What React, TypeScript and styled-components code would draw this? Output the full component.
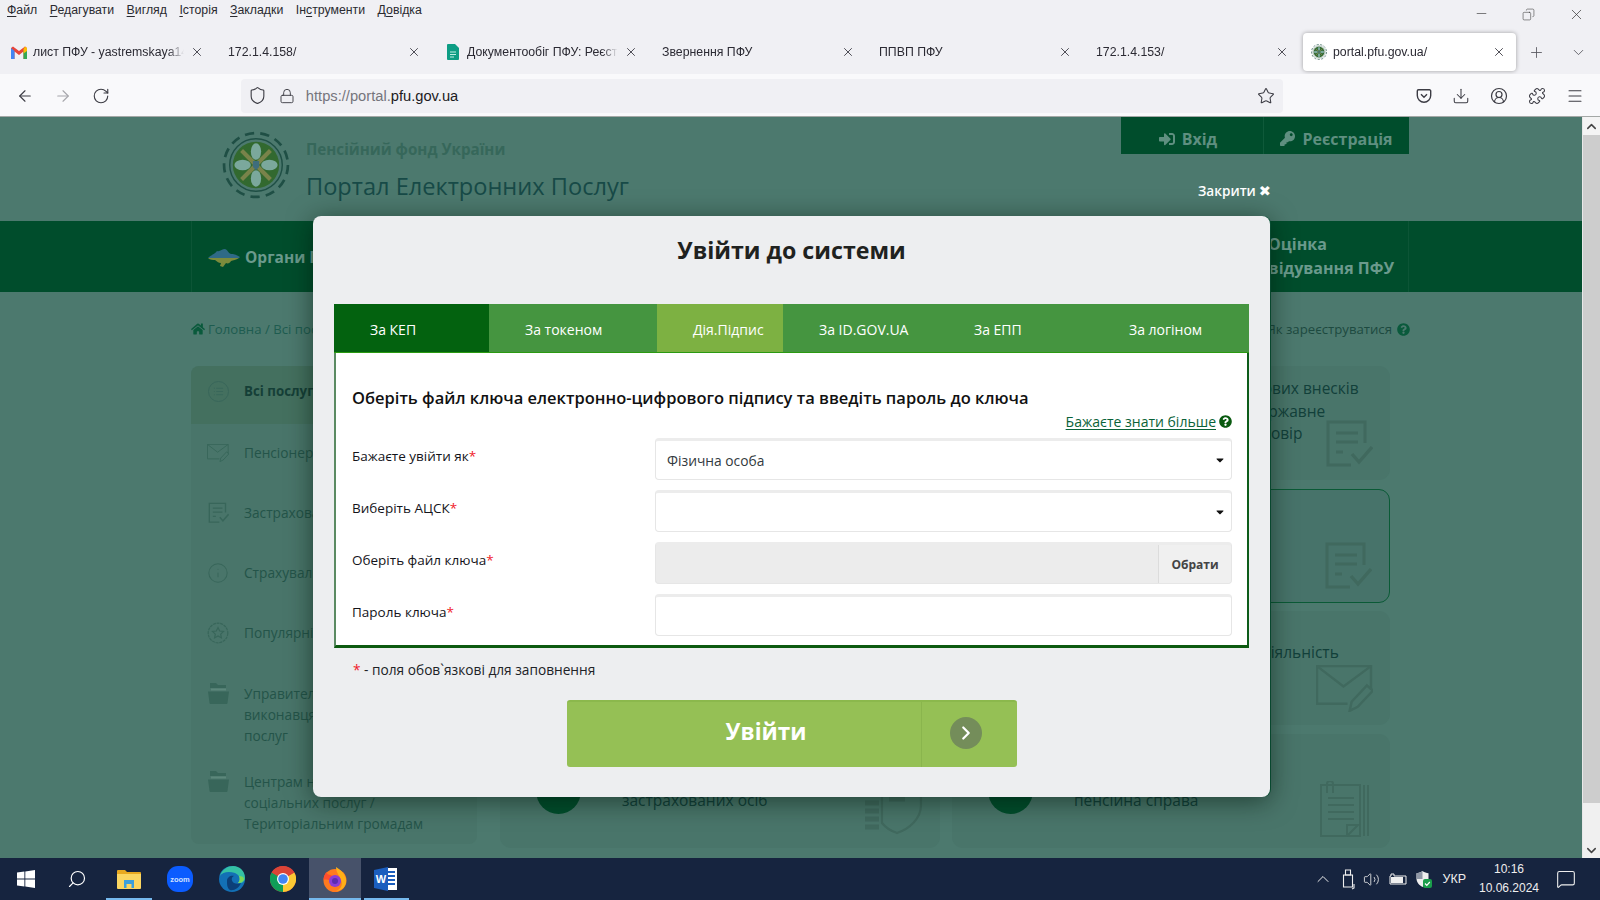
import React from "react";
import styled, { createGlobalStyle } from "styled-components";
import { ArrowLeft, ArrowRight, RotateCw, Shield, Lock, Star, Download, CircleUserRound, Puzzle, Menu, Minus, X, Plus, ChevronDown, Copy, ChevronUp, ChevronRight, List, Info, Volume2, MessageSquare, Search } from "lucide-react";
import { FaSignInAlt, FaKey, FaHome, FaQuestionCircle, FaCaretDown } from "react-icons/fa";

const Global = createGlobalStyle`
  html, body { margin: 0; padding: 0; width: 1600px; height: 900px; overflow: hidden; }
  * { box-sizing: border-box; }
  body { font-family: "Open Sans", "Noto Sans", sans-serif; }
`;

const Screen = styled.div`
  width: 1600px; height: 900px; display: flex; flex-direction: column; background: #f0f0f4;
`;
const UiFont = `"Liberation Sans", "Noto Sans", sans-serif`;

/* browser chrome */
const MenuBar = styled.div`
  height: 32px; display: flex; padding: 0 15px 0 7px; font-family: ${UiFont}; font-size: 12.3px; color: #2a2a30; position: relative;
`;
const MenuItem = styled.span`
  margin-right: 12.5px; line-height: 20px; white-space: nowrap;
  u { text-underline-offset: 2px; }
`;
const WinControls = styled.div`
  margin-left: auto; display: flex; align-items: flex-start; gap: 33px; padding-top: 6px; color: #333;
`;
const TabStrip = styled.div`
  height: 42px; display: flex; align-items: flex-start; padding: 1px 0 0 1px; gap: 4px;
`;
const Tab = styled.div<{ $active?: boolean }>`
  width: 213px; height: 38px; display: flex; align-items: center; padding: 0 10px 0 ${(p) => (p.$active ? 8 : 10)}px; gap: 6px;
  font-family: ${UiFont}; font-size: 12.3px; color: #2b2a33; border-radius: 4px; white-space: nowrap;
  background: ${(p) => (p.$active ? "#fff" : "transparent")};
  box-shadow: ${(p) => (p.$active ? "0 0 4px rgba(0,0,0,.35)" : "none")};
`;
const TabTitle = styled.span`
  flex: 1; overflow: hidden; min-width: 0;
  -webkit-mask-image: linear-gradient(to left, transparent 0, #000 16px);
  mask-image: linear-gradient(to left, transparent 0, #000 16px);
`;
const DocFav = styled.span`
  display: flex; margin: 0 2px;
`;
const StripEnd = styled.div`
  display: flex; align-items: center; height: 38px; margin-left: 8px; gap: 25px; color: #55555c;
`;
const Toolbar = styled.div`
  height: 43px; background: #f9f9fb; border-bottom: 1px solid #a4a8a6; display: flex; align-items: center; padding: 1px 16px 0 16px; color: #3c3c44;
`;
const NavButtons = styled.div`
  display: flex; gap: 20px; width: 225px; align-items: center;
`;
const UrlBar = styled.div`
  width: 1043px; height: 34px; background: #f0f0f4; border-radius: 4px; display: flex; align-items: center; padding: 0 8px 0 7px; gap: 12px;
`;
const UrlText = styled.span`
  font-family: ${UiFont}; font-size: 14.7px; color: #75757c; flex: 1; margin-left: -1px; b { font-weight: 400; color: #1c1b22; }
`;
const ToolIcons = styled.div`
  display: flex; align-items: center; gap: 20px; margin-left: 133px;
`;

/* viewport */
const Viewport = styled.div`
  flex: 1; display: flex; position: relative; overflow: hidden; min-height: 0;
`;
const Page = styled.div`
  width: 1582px; background: #4c796e; display: flex; flex-direction: column; color: #15443b;
`;
const Scrollbar = styled.div`
  width: 18px; background: #cdcdcd; display: flex; flex-direction: column; justify-content: space-between; border-left: 1px solid #e8e8e8;
`;
const ScrollBtn = styled.div<{ $tall?: boolean }>`
  height: ${(p) => (p.$tall ? "55px" : "18px")}; background: ${(p) => (p.$tall ? "#f0f0f0" : "#f4f4f4")}; display: flex; justify-content: center; align-items: ${(p) => (p.$tall ? "flex-end" : "center")}; color: #444;
`;
const Header = styled.div`
  height: 104px; padding-left: 191px; display: flex;
`;
const HeaderInner = styled.div`
  width: 1218px; display: flex;
`;
const LogoBox = styled.div`
  width: 115px; padding: 14px 0 0 31px;
`;
const Titles = styled.div`
  flex: 1; padding-top: 20px;
`;
const Org = styled.div`
  font-size: 15.2px; font-weight: 700; color: #36675a; line-height: 24px;
`;
const Portal = styled.div`
  font-size: 23.6px; color: #174a47; line-height: 34px; margin-top: 8px;
`;
const Auth = styled.div`
  display: flex; height: 37px; background: #004d2c;
`;
const AuthBtn = styled.div<{ $w: number; $first?: boolean }>`
  width: ${(p) => p.$w}px; display: flex; align-items: center; gap: 7px; justify-content: center; padding: 6px ${(p) => (p.$first ? 8 : 0)}px 0 0; font-size: 16px; font-weight: 700; color: #5f8f80;
  border-right: ${(p) => (p.$first ? "1px solid #0f5a3a" : "none")};
`;
const NavBand = styled.div`
  height: 71px; background: #004d2c; padding-left: 191px;
`;
const NavInner = styled.div`
  width: 1218px; height: 100%; border-left: 1px solid #0c5536; border-right: 1px solid #0c5536; display: flex; align-items: center; justify-content: space-between; padding: 0 15px 0 16px; font-size: 16px; font-weight: 700; color: #6b9a8c; line-height: 24px;
`;
const NavLeft = styled.div`
  display: flex; align-items: center; gap: 5px; font-size: 15.5px;
`;
const NavRight = styled.div`
  text-align: right; white-space: nowrap; width: 150px; padding-bottom: 2px;
`;
const NavLine = styled.div<{ $indent?: boolean }>`
  text-align: ${(p) => (p.$indent ? "left" : "right")};
  padding-left: ${(p) => (p.$indent ? "25px" : "0")};
`;
const Crumbs = styled.div`
  height: 74px; padding: 0 172px 0 191px; display: flex; align-items: center; justify-content: space-between; font-size: 13.2px; color: #1e5c50;
  svg { color: #0a5a3c; }
`;
const CrumbGroup = styled.div`
  display: flex; align-items: center; gap: 3px;
`;
const HelpLink = styled.div`
  display: flex; align-items: center; gap: 5px; font-size: 13.2px; color: #1d4a40;
`;
const Main = styled.div`
  display: flex; padding-left: 191px; gap: 23px;
`;
const Sidebar = styled.div`
  width: 286px; height: 478px; background: #49756a; border-radius: 8px; overflow: hidden;
`;
const SideItem = styled.div<{ $active?: boolean; $multi?: boolean }>`
  display: flex; gap: 15px; padding: ${(p) => (p.$active ? "15px 16px 22px" : p.$multi ? "19px 16px 6px" : "18px 16px 21px")};
  background: ${(p) => (p.$active ? "#44705f" : "transparent")};
  font-size: 13.7px; line-height: 21px; color: #245449; font-weight: ${(p) => (p.$active ? 700 : 400)};
  ${(p) => (p.$active ? "font-size:13.3px; color:#153f37;" : "")}
`;
const SideIcon = styled.span`
  width: 22px; height: 21px; display: flex; justify-content: center; align-items: center; flex: none; color: #38665a;
`;
const Cards = styled.div`
  display: grid; grid-template-columns: 440px 438px; grid-auto-rows: 114px; column-gap: 12px; row-gap: 8.5px;
`;
const Card = styled.div<{ $outlined?: boolean }>`
  position: relative; border-radius: 11px; display: flex; align-items: center; gap: 41px; padding-left: 36px;
  border: ${(p) => (p.$outlined ? "1.5px solid #0a5a36" : "none")}; background: ${(p) => (p.$outlined ? "#47736a" : "#49756a")};
  overflow: hidden;
`;
const CardBadge = styled.div`
  width: 45px; height: 46px; border-radius: 50%; background: #004d2c; flex: none;
`;
const CardText = styled.div<{ $lift: number }>`
  font-size: 15.5px; line-height: 22.5px; color: #12403a; white-space: nowrap; padding-bottom: ${(p) => p.$lift}px;
`;
const GhostIcon = styled.div<{ $right?: number; $bottom?: number }>`
  position: absolute; right: ${(p) => p.$right ?? 17}px; bottom: ${(p) => p.$bottom ?? 13}px; color: #40695e; display: flex;
`;

/* modal */
const CloseLink = styled.div`
  position: absolute; left: 1198px; top: 64px; display: flex; align-items: center; gap: 3px; color: #fff; font-size: 13.6px; font-weight: 600; line-height: 20px;
`;
const CloseGlyph = styled.span`
  font-family: "DejaVu Sans", sans-serif; font-size: 14.5px; line-height: 20px;
`;
const Modal = styled.div`
  position: absolute; left: 313px; top: 99px; width: 957px; height: 581px; background: #edeef0; border-radius: 8px; padding: 0 21px; box-shadow: 0 4px 26px rgba(0,20,10,.55), 1px 0 0 #0b5a3c;
`;
const ModalTitle = styled.h2`
  margin: 0 0 20px; height: 68px; line-height: 68px; text-align: center; font-size: 23.2px; font-weight: 700; color: #1f2220;
`;
const TabBar = styled.div`
  display: flex; height: 49px; background: #459540; border-bottom: 1px solid #2a9a10;
`;
const FormTab = styled.div<{ $w?: number; $bg?: string }>`
  ${(p) => (p.$w ? `width:${p.$w}px;` : "flex:1;")} background: ${(p) => p.$bg || "transparent"}; color: #fff; font-size: 14px; line-height: 52px; padding-left: 36px; white-space: nowrap;
`;
const Panel = styled.div`
  height: 295px; background: #fff; border-left: 2px solid #5a8a62; border-right: 2px solid #0d5c1a; border-bottom: 3px solid #0c5a10; padding: 0 15px 0 16px;
`;
const PanelHeading = styled.div`
  padding-top: 33px; font-size: 16.5px; font-weight: 600; line-height: 24px; color: #111; white-space: nowrap;
`;
const MoreRow = styled.div`
  display: flex; justify-content: flex-end; align-items: center; gap: 3px; height: 28px; padding-bottom: 6px; font-size: 14px; color: #0a6238;
  u { text-underline-offset: 2px; }
  svg { color: #0a5a10; }
`;
const FormRow = styled.div`
  display: grid; grid-template-columns: 303px 577px; height: 42px; margin-bottom: 10px;
`;
const Label = styled.div`
  font-size: 13.5px; line-height: 20px; padding-top: 8px; color: #14141a;
  i { color: #f01a2a; font-style: normal; }
`;
const Field = styled.div<{ $grey?: boolean }>`
  border: 1px solid #e6e6e6; border-top: 3px solid #ececec; border-radius: 4px; background: ${(p) => (p.$grey ? "#ececec" : "#fff")}; display: flex; align-items: center; padding-left: 11px; font-size: 13.8px; color: #333a40; position: relative; overflow: hidden;
`;
const FieldCaret = styled.span`
  position: absolute; right: 5px; top: 50%; transform: translateY(-50%); display: flex; color: #111;
`;
const PickButton = styled.div`
  margin-left: auto; width: 73px; height: 100%; background: #f0f0f0; border-left: 1px solid #dcdcdc; display: flex; align-items: center; justify-content: center; font-size: 12px; font-weight: 700; color: #444;
`;
const Note = styled.div`
  margin-top: 12px; padding-left: 19px; height: 20px; font-size: 13.7px; line-height: 20px; color: #202226;
  i { color: #f01a2a; font-style: normal; }
`;
const Submit = styled.div`
  width: 450px; height: 67px; margin: 20px auto 0; background: #95c055; border-top: 2px solid #8bb84c; border-radius: 3px; display: flex; color: #fff;
`;
const SubmitLabel = styled.div`
  width: 355px; text-align: center; font-size: 22.5px; font-weight: 700; line-height: 60px; padding-left: 45px; border-right: 1px solid #8aB54d;
`;
const SubmitArrow = styled.div`
  flex: 1; display: flex; justify-content: center; align-items: center; padding: 0 7px 3px 0;
`;
const ArrowCircle = styled.div`
  width: 32px; height: 32px; border-radius: 50%; background: #748d5a; display: flex; align-items: center; justify-content: center;
`;

/* taskbar */
const Taskbar = styled.div`
  height: 42px; background: #16243f; display: flex; align-items: center; color: #fff;
`;
const TaskCell = styled.div<{ $on?: boolean; $active?: boolean }>`
  width: 51.5px; height: 42px; display: flex; align-items: center; justify-content: center; position: relative;
  background: ${(p) => (p.$active ? "#47526a" : "transparent")};
  &::after { content: ""; position: absolute; left: 3px; right: 3px; bottom: 0; height: 2px; background: ${(p) => (p.$on ? "#76b9ed" : "transparent")}; ${(p) => (p.$active ? "left:0;right:0;" : "")} }
`;
const Tray = styled.div`
  margin-left: auto; display: flex; align-items: center; height: 100%; color: #eee; font-family: ${UiFont};
`;
const TrayIcons = styled.div`
  display: flex; align-items: center; gap: 8.5px; margin-right: 10px;
`;
const Lang = styled.span`
  font-size: 12.5px; margin-right: 12px;
`;
const Clock = styled.div`
  text-align: center; font-size: 12px; line-height: 19px; margin-right: 16px; width: 62px;
`;
const Notif = styled.div`
  display: flex; margin-right: 24px;
`;
const ListRing = styled.span`
  display: flex; width: 21px; height: 21px; border-radius: 50%; border: 1px solid #38665a; align-items: center; justify-content: center;
`;

const PfuLogo = ({ s }: { s: number }) => (
  <svg width={s} height={s} viewBox="0 0 66 66">
    <circle cx="33" cy="33" r="31" fill="none" stroke="#1f4f45" strokeWidth="2.6" strokeDasharray="9 6" />
    <circle cx="33" cy="33" r="25.5" fill="none" stroke="#1f4f45" strokeWidth="1.4" />
    <circle cx="33" cy="33" r="22.5" fill="#32692f" />
    <path d="M19 19L47 47M47 19L19 47" stroke="#79834a" strokeWidth="4" />
    <ellipse cx="33" cy="20" rx="5" ry="8" fill="#7ba89c" />
    <ellipse cx="33" cy="46" rx="5" ry="8" fill="#7ba89c" />
    <ellipse cx="20" cy="33" rx="8" ry="5" fill="#7ba89c" />
    <ellipse cx="46" cy="33" rx="8" ry="5" fill="#7ba89c" />
    <path d="M30 29h6v6l-3 3-3-3z" fill="#3f6d7c" />
  </svg>
);
const Gmail = () => (
  <svg width="16" height="13" viewBox="0 0 16 13">
    <path d="M0 2v11h3.5V5.5L8 9l4.5-3.5V13H16V2l-2-1.5L8 5 2 .5z" fill="#e8443a" />
    <path d="M0 2v11h3.5V5z" fill="#4285f4" />
    <path d="M16 2v11h-3.5V5z" fill="#34a853" />
    <path d="M14 .5L16 2v3l-3.5 2.5V3z" fill="#fbbc04" />
  </svg>
);
const DocIcon = () => (
  <svg width="12" height="16" viewBox="0 0 12 16">
    <path d="M1 0h7l4 4v11a1 1 0 0 1-1 1H1a1 1 0 0 1-1-1V1a1 1 0 0 1 1-1z" fill="#0d9d84" />
    <path d="M3 8h6M3 10.5h6M3 13h4" stroke="#bfeee4" strokeWidth="1" />
  </svg>
);
const Pocket = () => (
  <svg width="16" height="16" viewBox="0 0 16 16" fill="none" stroke="#3c3c44" strokeWidth="1.4">
    <path d="M2.5 1.8h11a1.2 1.2 0 0 1 1.2 1.2v4.5a6.7 6.7 0 0 1-13.4 0V3a1.2 1.2 0 0 1 1.2-1.2z" />
    <path d="M5 6.2l3 3 3-3" />
  </svg>
);
const WinLogo = () => (
  <svg width="18" height="18" viewBox="0 0 18 18" fill="#fff">
    <path d="M0 2.6l7.4-1v7H0zM8.3 1.4L18 0v8.6H8.3zM0 9.4h7.4v7L0 15.4zM8.3 9.4H18V18l-9.7-1.4z" />
  </svg>
);
const Explorer = () => (
  <svg width="24" height="20" viewBox="0 0 24 20">
    <path d="M0 2a1 1 0 0 1 1-1h7l2 2h13a1 1 0 0 1 1 1v2H0z" fill="#e8a920" />
    <path d="M0 5h24v14a1 1 0 0 1-1 1H1a1 1 0 0 1-1-1z" fill="#fbd661" />
    <path d="M7 19v-8h10v8h-2.5v-4h-5v4z" fill="#3b9fdc" />
  </svg>
);
const ZoomLogo = () => (
  <svg width="26" height="26" viewBox="0 0 26 26">
    <rect width="26" height="26" rx="11" fill="#0b5cff" />
    <text x="13" y="15.5" textAnchor="middle" fontSize="7.5" fontFamily="Liberation Sans" fontWeight="700" fill="#cfe0ff">zoom</text>
  </svg>
);
const EdgeLogo = () => (
  <svg width="26" height="26" viewBox="0 0 26 26">
    <circle cx="13" cy="13" r="13" fill="#1370b5" />
    <path d="M1 10C3 3 9 0 14 0c7 0 12 5 12 12 0 4-4 6-7 5 3-3 2-8-3-10C10 5 3 6 1 10z" fill="#35c1a5" />
    <path d="M25 13c0 2-3 4-6 4 2-2 2-5 1-7 3 0 5 1 5 3z" fill="#7fd858" />
    <path d="M8 15c0-4 4-6 7-5-3 1-3 5 0 7 2 1 5 1 7 0-2 5-7 8-11 7-3-2-3-6-3-9z" fill="#0c3f78" />
  </svg>
);
const ChromeLogo = () => (
  <svg width="26" height="26" viewBox="0 0 26 26">
    <circle cx="13" cy="13" r="13" fill="#db4437" />
    <path d="M13 13L1.7 6.5A13 13 0 0 0 13 26z" fill="#0f9d58" />
    <path d="M13 13v13A13 13 0 0 0 24.3 6.5z" fill="#fcc934" />
    <path d="M13 13L1.7 6.5A13 13 0 0 1 13 0a13 13 0 0 1 11.3 6.5z" fill="#db4437" />
    <circle cx="13" cy="13" r="6" fill="#fff" />
    <circle cx="13" cy="13" r="4.8" fill="#4285f4" />
  </svg>
);
const FoxLogo = () => (
  <svg width="26" height="26" viewBox="0 0 26 26">
    <circle cx="13" cy="14.5" r="11.5" fill="#ff7a1f" />
    <path d="M14 1c5 3 9 7 10 12 1 7-4 12-10 12 5-2 7-6 5-11-1-4-5-7-5-13z" fill="#ffb017" />
    <path d="M1.5 14c0-3 1-6 3-8 0 2 2 3 4 3 2 1 3 2 3 2-2 1-3 2-3 3-3 0-5-1-7 0z" fill="#ff4d2e" />
    <circle cx="13" cy="15" r="6" fill="#8a3dd6" />
    <circle cx="13" cy="15" r="3" fill="#5b2cb0" />
  </svg>
);
const WordLogo = () => (
  <svg width="24" height="24" viewBox="0 0 24 24">
    <path d="M9 1h14v22H9z" fill="#fff" />
    <path d="M12 5h9M12 9h9M12 13h9M12 17h9" stroke="#1b5ebe" strokeWidth="2" />
    <path d="M0 3l14-3v24L0 21z" fill="#1b5ebe" />
    <text x="7" y="16" textAnchor="middle" fontSize="11" fontFamily="Liberation Sans" fontWeight="700" fill="#fff">W</text>
  </svg>
);
const UaMap = () => (
  <svg width="32" height="21" viewBox="0 0 32 21">
    <path d="M0 12C3 9 7 8 9 5c3 1 5-2 8-2 3 1 3 4 6 5 3 0 6 1 9 3l-1 1H0z" fill="#2f6a86" />
    <path d="M0 12h31c-3 2-6 2-8 3-1 2-3 3-5 2-1 1-2 3-3 4l-3-1 1-3c-3 0-4-2-6-3-2 0-5 0-7-2z" fill="#7c8b3c" />
  </svg>
);
const ClipCheck = ({ s }: { s: number }) => (
  <svg width={s} height={s} viewBox="0 0 48 48" fill="none" stroke="currentColor" strokeWidth="3">
    <path d="M40 24V3H3v43h23" />
    <path d="M11 14h22M11 23h22M11 33h7" />
    <path d="M27 35l7 8 13-15" strokeWidth="3.4" />
  </svg>
);
const MailPen = ({ s, h }: { s: number; h?: number }) => (
  <svg width={s} height={h || s} viewBox="0 0 56 46" fill="none" stroke="currentColor" strokeWidth="2.4">
    <path d="M54 24V1H1v37h30" />
    <path d="M1 1l26 20L54 1" />
    <path d="M33 45l2-9 15-16 6 5-15 16z" />
  </svg>
);
const Notebook = () => (
  <svg width="50" height="56" viewBox="0 0 50 56" fill="none" stroke="currentColor" strokeWidth="2">
    <path d="M2 4h39v51H2z" />
    <path d="M45 4v51M49 4v51" />
    <path d="M9 17h26M9 24h26M9 31h26M9 38h26" />
    <path d="M28 55l11-11H28z" />
    <path d="M8 12V3a3 3 0 0 1 6 0v9" />
  </svg>
);
const ShieldList = () => (
  <svg width="60" height="64" viewBox="0 0 60 64" fill="none" stroke="currentColor" strokeWidth="2.2">
    <path d="M34 2l24 8v24c0 14-12 24-24 28-6-2-11-5-15-10V10z" />
    <path d="M26 28h16" strokeWidth="5" />
    <path d="M2 32h14M2 40h14M2 48h14M2 56h14" strokeWidth="5" />
  </svg>
);
const CircleStar = () => (
  <svg width="22" height="22" viewBox="0 0 22 22" fill="none" stroke="currentColor" strokeWidth="1.2">
    <circle cx="11" cy="11" r="9.8" strokeDasharray="3 .7" />
    <path d="M11 5.5l1.7 3.5 3.8.5-2.8 2.6.7 3.8-3.4-1.9-3.4 1.9.7-3.8L5.5 9.500 9.3 9z" />
  </svg>
);
const FolderStack = () => (
  <svg width="21" height="21" viewBox="0 0 21 21" fill="#38665a">
    <path d="M2 0h6l2 2h8v3H2z" />
    <path d="M3 5.5h15v2H3z" fill="#5c877b" />
    <path d="M0 8.5h21l-1.500 11.500a1 1 0 0 1-1 1H2.500a1 1 0 0 1-1-1z" />
  </svg>
);
const BatteryIcon = () => (
  <svg width="18" height="12" viewBox="0 0 18 12" fill="none" stroke="#eee" strokeWidth="1">
    <path d="M1 3h1V1h3v2h12v8H1z" />
    <path d="M2 4h12v6H2z" fill="#eee" stroke="none" />
  </svg>
);
const UsbStick = () => (
  <svg width="13" height="21" viewBox="0 0 13 21" fill="none" stroke="#eee" strokeWidth="1.1">
    <path d="M3.5 1h5v5h-5z" />
    <path d="M1.5 6h9v12h-9z" />
    <path d="M12 15v4l-2 1" />
  </svg>
);
const ShieldTray = () => (
  <svg width="17" height="17" viewBox="0 0 17 17">
    <path d="M7.5 0c2 1.500 4 2 6 2.200v5.300c0 4-3 7-6 8.500-3-1.500-6-4.500-6-8.500V2.200C3.500 2 5.500 1.500 7.500 0z" fill="#eee" />
    <path d="M7.5 0v8h-6V2.200C3.500 2 5.500 1.500 7.500 0z" fill="#8f97a6" />
    <rect x="8" y="8" width="9" height="9" rx="2" fill="#1a9e4b" />
    <path d="M10 12.500l1.800 1.800 3-3.300" stroke="#fff" strokeWidth="1.2" fill="none" />
  </svg>
);

const menu: [string, string, string][] = [
  ["", "Ф", "айл"], ["", "Р", "едагувати"], ["", "В", "игляд"], ["", "І", "сторія"], ["", "З", "акладки"], ["Ін", "с", "трументи"], ["Д", "о", "відка"],
];

export default function App() {
  return (
    <Screen>
      <Global />
      <MenuBar>
        {menu.map(([a, b, c]) => (
          <MenuItem key={b + c}>{a}<u>{b}</u>{c}</MenuItem>
        ))}
        <WinControls>
          <Minus size={15} strokeWidth={1} />
          <Copy size={13} strokeWidth={1} style={{ transform: "scaleX(-1)", marginTop: 2 }} />
          <X size={17} strokeWidth={1} />
        </WinControls>
      </MenuBar>
      <TabStrip>
        <Tab><Gmail /><TabTitle>лист ПФУ - yastremskaya140</TabTitle><X size={14} strokeWidth={1.4} /></Tab>
        <Tab><TabTitle>172.1.4.158/</TabTitle><X size={14} strokeWidth={1.4} /></Tab>
        <Tab><DocFav><DocIcon /></DocFav><TabTitle>Документообіг ПФУ: Реєстр</TabTitle><X size={14} strokeWidth={1.4} /></Tab>
        <Tab><TabTitle>Звернення ПФУ</TabTitle><X size={14} strokeWidth={1.4} /></Tab>
        <Tab><TabTitle>ППВП ПФУ</TabTitle><X size={14} strokeWidth={1.4} /></Tab>
        <Tab><TabTitle>172.1.4.153/</TabTitle><X size={14} strokeWidth={1.4} /></Tab>
        <Tab $active><PfuLogo s={16} /><TabTitle>portal.pfu.gov.ua/</TabTitle><X size={14} strokeWidth={1.4} /></Tab>
        <StripEnd>
          <Plus size={17} strokeWidth={1.2} />
          <ChevronDown size={17} strokeWidth={1.2} />
        </StripEnd>
      </TabStrip>
      <Toolbar>
        <NavButtons>
          <ArrowLeft size={18} strokeWidth={1.5} />
          <ArrowRight size={18} strokeWidth={1.5} color="#a6a6ab" />
          <RotateCw size={18} strokeWidth={1.5} />
        </NavButtons>
        <UrlBar>
          <Shield size={19} strokeWidth={1.4} />
          <Lock size={16} strokeWidth={1.4} />
          <UrlText>https://portal.<b>pfu.gov.ua</b></UrlText>
          <Star size={18} strokeWidth={1.4} />
        </UrlBar>
        <ToolIcons>
          <Pocket />
          <Download size={18} strokeWidth={1.4} />
          <CircleUserRound size={18} strokeWidth={1.6} />
          <Puzzle size={18} strokeWidth={1.4} />
          <Menu size={18} strokeWidth={1.4} />
        </ToolIcons>
      </Toolbar>

      <Viewport>
        <Page>
          <Header>
            <HeaderInner>
              <LogoBox><PfuLogo s={68} /></LogoBox>
              <Titles>
                <Org>Пенсійний фонд України</Org>
                <Portal>Портал Електронних Послуг</Portal>
              </Titles>
              <Auth>
                <AuthBtn $w={143} $first><FaSignInAlt size={16} />Вхід</AuthBtn>
                <AuthBtn $w={145}><FaKey size={15} />Реєстрація</AuthBtn>
              </Auth>
            </HeaderInner>
          </Header>
          <NavBand>
            <NavInner>
              <NavLeft><UaMap />Органи ПФУ</NavLeft>
              <NavRight>
                <NavLine $indent>Оцінка</NavLine>
                <NavLine>відвідування ПФУ</NavLine>
              </NavRight>
            </NavInner>
          </NavBand>
          <Crumbs>
            <CrumbGroup><FaHome size={14} />Головна / Всі послуги</CrumbGroup>
            <HelpLink>Як зареєструватися <FaQuestionCircle size={13} /></HelpLink>
          </Crumbs>
          <Main>
            <Sidebar>
              <SideItem $active><SideIcon><ListRing><List size={11} /></ListRing></SideIcon>Всі послуги</SideItem>
              <SideItem><SideIcon><MailPen s={22} h={18} /></SideIcon>Пенсіонерам</SideItem>
              <SideItem><SideIcon><ClipCheck s={21} /></SideIcon>Застрахованим особам</SideItem>
              <SideItem><SideIcon><Info size={24} strokeWidth={1.1} /></SideIcon>Страхувальникам</SideItem>
              <SideItem><SideIcon><CircleStar /></SideIcon>Популярні послуги</SideItem>
              <SideItem $multi><SideIcon><FolderStack /></SideIcon><div>Управителям та<br />виконавцям житлових<br />послуг</div></SideItem>
              <SideItem $multi><SideIcon><FolderStack /></SideIcon><div>Центрам надання<br />соціальних послуг /<br />Територіальним громадам</div></SideItem>
            </Sidebar>
            <Cards>
              <Card><CardBadge /><CardText $lift={22}>Перегляд даних</CardText></Card>
              <Card>
                <CardBadge />
                <CardText $lift={24}>Періодична сплата страхових внесків<br />в загальнообов'язкове державне<br />пенсійне страхування Договір</CardText>
                <GhostIcon><ClipCheck s={48} /></GhostIcon>
              </Card>
              <Card><CardBadge /><CardText $lift={22}>Заяви</CardText></Card>
              <Card $outlined><CardBadge /><CardText $lift={22}>Звернення</CardText><GhostIcon><ClipCheck s={48} /></GhostIcon></Card>
              <Card><CardBadge /><CardText $lift={22}>Довідки</CardText></Card>
              <Card>
                <CardBadge />
                <CardText $lift={31}>Повідомлення про свою діяльність</CardText>
                <GhostIcon><MailPen s={57} h={47} /></GhostIcon>
              </Card>
              <Card>
                <CardBadge />
                <CardText $lift={4}>Реєстр<br />застрахованих осіб</CardText>
                <GhostIcon><ShieldList /></GhostIcon>
              </Card>
              <Card>
                <CardBadge />
                <CardText $lift={4}>Електронна<br />пенсійна справа</CardText>
                <GhostIcon $right={21} $bottom={11}><Notebook /></GhostIcon>
              </Card>
            </Cards>
          </Main>
        </Page>
        <Scrollbar>
          <ScrollBtn><ChevronUp size={15} strokeWidth={2.4} /></ScrollBtn>
          <ScrollBtn $tall><ChevronDown size={15} strokeWidth={2.4} /></ScrollBtn>
        </Scrollbar>

        <CloseLink>Закрити <CloseGlyph>✖</CloseGlyph></CloseLink>
        <Modal>
          <ModalTitle>Увійти до системи</ModalTitle>
          <TabBar>
            <FormTab $w={155} $bg="#03620f">За КЕП</FormTab>
            <FormTab $w={168}>За токеном</FormTab>
            <FormTab $w={126} $bg="#7db142">Дія.Підпис</FormTab>
            <FormTab $w={155}>За ID.GOV.UA</FormTab>
            <FormTab $w={155}>За ЕПП</FormTab>
            <FormTab>За логіном</FormTab>
          </TabBar>
          <Panel>
            <PanelHeading>Оберіть файл ключа електронно-цифрового підпису та введіть пароль до ключа</PanelHeading>
            <MoreRow><u>Бажаєте знати більше </u><FaQuestionCircle size={13} /></MoreRow>
            <FormRow>
              <Label>Бажаєте увійти як<i>*</i></Label>
              <Field>Фізична особа<FieldCaret><FaCaretDown size={12} /></FieldCaret></Field>
            </FormRow>
            <FormRow>
              <Label>Виберіть АЦСК<i>*</i></Label>
              <Field><FieldCaret><FaCaretDown size={12} /></FieldCaret></Field>
            </FormRow>
            <FormRow>
              <Label>Оберіть файл ключа<i>*</i></Label>
              <Field $grey><PickButton>Обрати</PickButton></Field>
            </FormRow>
            <FormRow>
              <Label>Пароль ключа<i>*</i></Label>
              <Field />
            </FormRow>
          </Panel>
          <Note><i>*</i> - поля обов`язкові для заповнення</Note>
          <Submit>
            <SubmitLabel>Увійти</SubmitLabel>
            <SubmitArrow><ArrowCircle><ChevronRight size={22} color="#fff" strokeWidth={2.4} /></ArrowCircle></SubmitArrow>
          </Submit>
        </Modal>
      </Viewport>

      <Taskbar>
        <TaskCell><WinLogo /></TaskCell>
        <TaskCell><Search size={20} strokeWidth={1.4} style={{ transform: "scaleX(-1)" }} /></TaskCell>
        <TaskCell $on><Explorer /></TaskCell>
        <TaskCell><ZoomLogo /></TaskCell>
        <TaskCell><EdgeLogo /></TaskCell>
        <TaskCell><ChromeLogo /></TaskCell>
        <TaskCell $on $active><FoxLogo /></TaskCell>
        <TaskCell $on><WordLogo /></TaskCell>
        <Tray>
          <TrayIcons>
            <ChevronUp size={20} strokeWidth={1.2} />
            <UsbStick />
            <Volume2 size={17} strokeWidth={1.2} />
            <BatteryIcon />
            <ShieldTray />
          </TrayIcons>
          <Lang>УКР</Lang>
          <Clock>10:16<br />10.06.2024</Clock>
          <Notif><MessageSquare size={20} strokeWidth={1.3} /></Notif>
        </Tray>
      </Taskbar>
    </Screen>
  );
}
